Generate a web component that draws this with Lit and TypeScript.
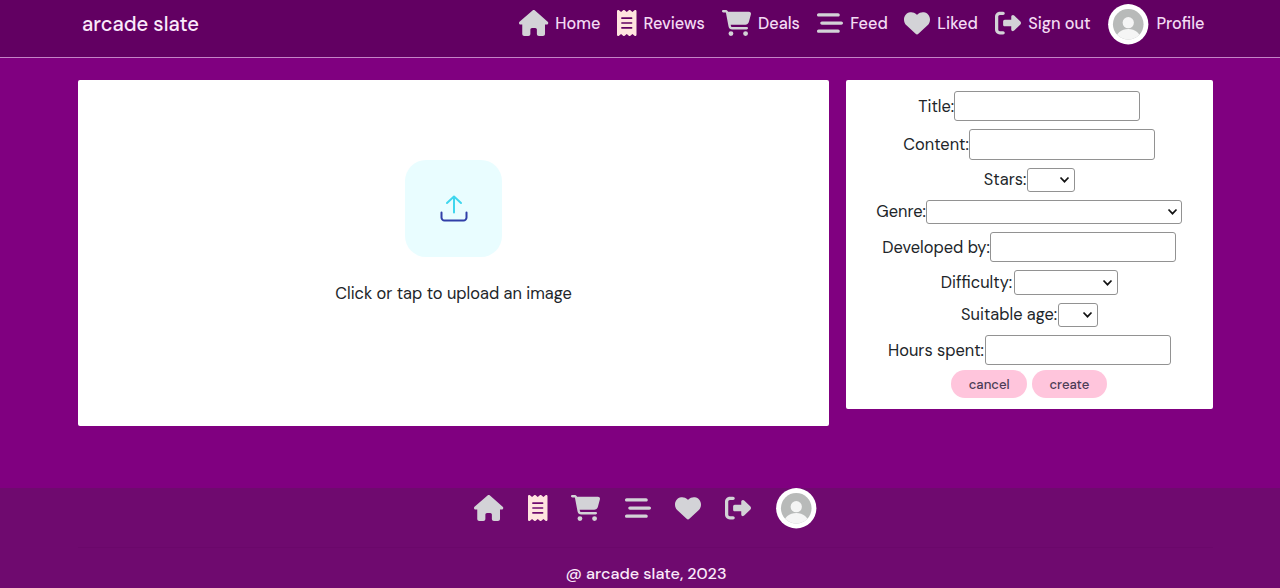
import { LitElement, html, css, svg } from "lit";
import { customElement, property } from "lit/decorators.js";
import { styleMap } from "lit/directives/style-map.js";

interface Glyph { w: number; d: string; }

const GLYPHS: Record<string, Glyph> = {
  home: { w: 576, d: "M575.8 255.5c0 18-15 32.1-32 32.1h-32l.7 160.2c0 2.7-.2 5.4-.5 8.1V472c0 22.1-17.9 40-40 40H456c-1.1 0-2.2 0-3.3-.1c-1.4 .1-2.8 .1-4.2 .1H416 392c-22.1 0-40-17.9-40-40V448 384c0-17.7-14.3-32-32-32H256c-17.7 0-32 14.3-32 32v64 24c0 22.1-17.9 40-40 40H160 128.1c-1.5 0-3-.1-4.5-.2c-1.2 .1-2.4 .2-3.6 .2H104c-22.1 0-40-17.9-40-40V360c0-.9 0-1.9 .1-2.8V287.6H32c-18 0-32-14-32-32.1c0-9 3-17 10-24L266.4 8c7-7 15-8 22-8s15 2 21 7L564.8 231.5c8 7 12 15 11 24z" },
  reviews: { w: 384, d: "M14 2.2C22.5-1.7 32.5-.3 39.6 5.8L80 40.4 120.4 5.8c9-7.7 22.3-7.7 31.2 0L192 40.4 232.4 5.8c9-7.7 22.3-7.7 31.2 0L304 40.4 344.4 5.8c7.1-6.1 17.1-7.5 25.6-3.6s14 12.4 14 21.8V488c0 9.4-5.5 17.9-14 21.8s-18.5 2.5-25.6-3.6L304 471.6l-40.4 34.6c-9 7.7-22.3 7.7-31.2 0L192 471.6l-40.4 34.6c-9 7.7-22.3 7.7-31.2 0L80 471.6 39.6 506.2c-7.1 6.1-17.1 7.5-25.6 3.6S0 497.4 0 488V24C0 14.6 5.5 6.1 14 2.2zM96 144c-8.8 0-16 7.2-16 16s7.2 16 16 16H288c8.8 0 16-7.2 16-16s-7.2-16-16-16H96zM80 352c0 8.8 7.2 16 16 16H288c8.8 0 16-7.2 16-16s-7.2-16-16-16H96c-8.8 0-16 7.2-16 16zM96 240c-8.8 0-16 7.2-16 16s7.2 16 16 16H288c8.8 0 16-7.2 16-16s-7.2-16-16-16H96z" },
  deals: { w: 576, d: "M0 24C0 10.7 10.7 0 24 0H69.5c22 0 41.5 12.8 50.6 32h411c26.3 0 45.5 25 38.6 50.4l-41 152.3c-8.5 31.4-37 53.3-69.5 53.3H170.7l5.4 28.5c2.2 11.3 12.1 19.5 23.6 19.5H488c13.3 0 24 10.7 24 24s-10.7 24-24 24H199.7c-34.6 0-64.3-24.6-70.7-58.5L77.4 54.5c-.7-3.8-4-6.5-7.9-6.5H24C10.7 48 0 37.3 0 24zM128 464a48 48 0 1 1 96 0 48 48 0 1 1 -96 0zm336-48a48 48 0 1 1 0 96 48 48 0 1 1 0-96z" },
  feed: { w: 512, d: "M0 96C0 78.3 14.3 64 32 64H416c17.7 0 32 14.3 32 32s-14.3 32-32 32H32C14.3 128 0 113.7 0 96zM64 256c0-17.7 14.3-32 32-32H480c17.7 0 32 14.3 32 32s-14.3 32-32 32H96c-17.7 0-32-14.3-32-32zM448 416c0 17.7-14.3 32-32 32H32c-17.7 0-32-14.3-32-32s14.3-32 32-32H416c17.7 0 32 14.3 32 32z" },
  liked: { w: 512, d: "M47.6 300.4L228.3 469.1c7.5 7 17.4 10.9 27.7 10.9s20.2-3.9 27.7-10.9L464.4 300.4c30.4-28.3 47.6-68 47.6-109.5v-5.8c0-69.9-50.5-129.5-119.4-141C347 36.5 300.6 51.4 268 84L256 96 244 84c-32.6-32.6-79-47.5-124.6-39.9C50.5 55.6 0 115.2 0 185.1v5.8c0 41.5 17.2 81.2 47.6 109.5z" },
  signout: { w: 512, d: "M377.9 105.9L500.7 228.7c7.2 7.2 11.3 17.1 11.3 27.3s-4.1 20.1-11.3 27.3L377.9 406.1c-6.4 6.4-15 9.9-24 9.9c-18.7 0-33.9-15.2-33.9-33.9l0-62.1-128 0c-17.7 0-32-14.3-32-32l0-64c0-17.7 14.3-32 32-32l128 0 0-62.1c0-18.7 15.2-33.9 33.9-33.9c9 0 17.6 3.6 24 9.9zM160 96L96 96c-17.7 0-32 14.3-32 32l0 256c0 17.7 14.3 32 32 32l64 0c17.7 0 32 14.3 32 32s-14.3 32-32 32l-64 0c-53 0-96-43-96-96L0 128C0 75 43 32 96 32l64 0c17.7 0 32 14.3 32 32s-14.3 32-32 32z" },
};

const NAV = [
  { icon: "home", label: "Home", width: 44.8 },
  { icon: "reviews", label: "Reviews", width: 61.2 },
  { icon: "deals", label: "Deals", width: 42.2 },
  { icon: "feed", label: "Feed", width: 37.2 },
  { icon: "liked", label: "Liked", width: 40.9 },
  { icon: "signout", label: "Sign out", width: 62.6 },
  { icon: "avatar", label: "Profile", width: 48 },
];

const FIELDS = [
  { label: "Title:", labelWidth: 36, kind: "input", width: 186 },
  { label: "Content:", labelWidth: 66, kind: "input", width: 186 },
  { label: "Stars:", labelWidth: 43, kind: "select", width: 48 },
  { label: "Genre:", labelWidth: 50, kind: "select", width: 256 },
  { label: "Developed by:", labelWidth: 108, kind: "input", width: 186 },
  { label: "Difficulty:", labelWidth: 73, kind: "select", width: 104 },
  { label: "Suitable age:", labelWidth: 97, kind: "select", width: 39.5 },
  { label: "Hours spent:", labelWidth: 96.5, kind: "input", width: 186 },
];

@customElement("nav-icon")
export class NavIcon extends LitElement {
  @property() name = "home";

  static styles = css`
    :host { display: block; flex: none; }
    svg { display: block; overflow: visible; }
    .glyph { height: 26px; fill: #d3d3d7; }
    .reviews { fill: #ffe4df; }
  `;

  render() {
    if (this.name === "avatar") {
      return html`<svg width="40.5" height="40.5" viewBox="0 0 41 41">
        ${svg`<defs><clipPath id="disc"><circle cx="20.5" cy="20.5" r="15.5"/></clipPath></defs>
        <circle cx="20.5" cy="20.5" r="20.4" fill="#fff"/>
        <circle cx="20.5" cy="20.5" r="15.5" fill="#b8bab9"/>
        <g clip-path="url(#disc)" fill="#f5f5f5">
          <circle cx="20.5" cy="18.9" r="5.7"/>
          <ellipse cx="20.5" cy="36" rx="12.7" ry="10.8"/>
        </g>`}
      </svg>`;
    }
    const g = GLYPHS[this.name];
    return html`<svg class="glyph ${this.name}" width=${(g.w / 512) * 26} viewBox="0 0 ${g.w} 512"><path d=${g.d}></path></svg>`;
  }
}

@customElement("app-root")
export class AppRoot extends LitElement {
  static styles = css`
    :host {
      display: flex; flex-direction: column; height: 588px; overflow: hidden;
      background: #800080; color: #212529;
      font-family: "DM Sans", Inter, "Open Sans", sans-serif; font-size: 16.4px;
    }
    * { box-sizing: border-box; }
    span, p, a { white-space: nowrap; margin: 0; }
    header {
      flex: none; height: 58px; padding: 0 75.5px 11px 82px;
      display: flex; align-items: center; justify-content: space-between;
      background: #620062; border-bottom: 1px solid #c583c7; color: #f3daf3;
    }
    .brand { font-size: 20.2px; font-weight: 500; color: #fbeafb; padding-top: 2px; }
    nav { display: flex; align-items: center; gap: 16.8px; height: 46px; }
    .item { display: flex; align-items: center; gap: 7.2px; height: 46px; }
    .wide { margin-left: 0.6px; gap: 7.8px; }
    .wide nav-icon { padding-top: 2px; }
    .item span { font-weight: 500; font-size: 16.25px; line-height: 22px; margin-top: 1px; }
    main {
      flex: none; height: 430px; padding: 22px 67px 0 78px;
      display: flex; align-items: flex-start; gap: 16.6px;
    }
    .card { background: #fff; border-radius: 2px; }
    .upload {
      flex: 1; height: 346px; padding-top: 80px;
      display: flex; flex-direction: column; align-items: center; gap: 26.6px;
    }
    .tile {
      width: 96.5px; height: 96.5px; border-radius: 21px; background: #e9fdff;
      display: flex; align-items: center; justify-content: center; padding-top: 1px;
    }
    .upload p { line-height: 21px; }
    form {
      width: 367.4px; height: 329px; padding-top: 10.9px;
      display: flex; flex-direction: column; align-items: center; gap: 8px;
    }
    .row { display: flex; align-items: center; }
    .row span { line-height: 20px; margin-top: 1px; }
    .box {
      height: 30.4px; border: 1px solid #929292; border-radius: 3px; background: #fff;
      display: flex; align-items: center; justify-content: flex-end; padding-right: 3.5px;
    }
    .select { height: 24.2px; }
    .actions { display: flex; gap: 4.5px; margin-top: -3.4px; }
    button {
      width: 75.7px; height: 28.5px; padding: 0; border: 0; border-radius: 15px;
      background: #ffc5dc; color: #4b3c55; font: 500 13.1px "DM Sans", Inter, sans-serif;
    }
    footer {
      flex: none; height: 100px; background: #6f0a6f; padding: 0 67px 0 78px;
      display: flex; flex-direction: column; align-items: center;
    }
    .shortcuts { display: flex; align-items: center; gap: 24.1px; height: 40px; padding-right: 0.6px; }
    .shortcuts nav-icon:last-child { margin-left: 0.8px; }
    .rule { width: 100%; height: 1px; margin-top: 19px; background: #6b086b; }
    .copy { color: #fbeafb; font-weight: 500; font-size: 16.2px; line-height: 20px; margin-top: 16px; padding-left: 1px; }
  `;

  render() {
    return html`
      <header>
        <span class="brand">arcade slate</span>
        <nav>
          ${NAV.map((n) => html`<a class="item ${n.icon === "avatar" ? "wide" : ""}">
            <nav-icon name=${n.icon}></nav-icon>
            <span style=${styleMap({ width: `${n.width}px` })}>${n.label}</span>
          </a>`)}
        </nav>
      </header>
      <main>
        <section class="card upload">
          <div class="tile">
            <svg width="30" height="30" viewBox="0 0 30 30" fill="none" stroke-width="2" stroke-linecap="round" stroke-linejoin="round">
              <path d="M15 18.5V2.5M8 9L15 2.5L22 9" stroke="#3fd6ee"></path>
              <path d="M2.5 18.5v5a3 3 0 0 0 3 3h19a3 3 0 0 0 3-3v-5" stroke="#303fa8"></path>
            </svg>
          </div>
          <p>Click or tap to upload an image</p>
        </section>
        <form class="card">
          ${FIELDS.map((f) => html`<div class="row">
            <span style=${styleMap({ width: `${f.labelWidth}px` })}>${f.label}</span>
            <div class="box ${f.kind}" style=${styleMap({ width: `${f.width}px` })}>
              ${f.kind === "select"
                ? html`<svg width="11" height="8" viewBox="0 0 11 8" fill="none" stroke="#111" stroke-width="1.7"><path d="M1.5 1.5L5.5 5.7L9.5 1.5"></path></svg>`
                : null}
            </div>
          </div>`)}
          <div class="actions">
            <button type="button">cancel</button>
            <button type="button">create</button>
          </div>
        </form>
      </main>
      <footer>
        <div class="shortcuts">${NAV.map((n) => html`<nav-icon name=${n.icon}></nav-icon>`)}</div>
        <div class="rule"></div>
        <p class="copy">@ arcade slate, 2023</p>
      </footer>
    `;
  }
}
